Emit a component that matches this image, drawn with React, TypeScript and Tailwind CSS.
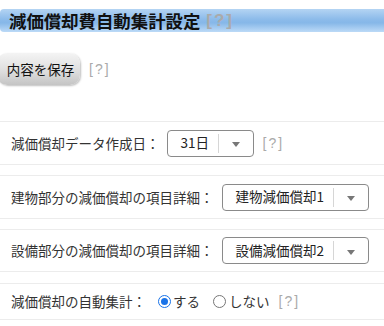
const jp = "font-['Noto_Sans_CJK_JP',sans-serif]";

function Help({ className = '' }: { className?: string }) {
  return (
    <span className={`font-['Liberation_Sans',sans-serif] tracking-[2px] text-[#aaa] ${className}`}>[?]</span>
  )
}

function Select({ value, width }: { value: string; width: string }) {
  return (
    <div className={`flex h-[27px] ${width} items-center rounded-[4px] border border-[#8a8a8a] bg-white`}>
      <span className="flex-1 pl-[13px] text-[13.5px] leading-none text-[#222]">{value}</span>
      <span className="h-[19px] w-px bg-[#d6d6d6]" />
      <span className="flex w-[34px] items-center justify-center pt-[3px]">
        <svg width="8" height="5" viewBox="0 0 8 5">
          <path d="M0 0h8L4 5z" fill="#777" />
        </svg>
      </span>
    </div>
  )
}

function Radio({ checked }: { checked?: boolean }) {
  return checked ? (
    <span className="flex h-[13px] w-[13px] items-center justify-center rounded-full border border-[#1a73e8] bg-white">
      <span className="h-[7px] w-[7px] rounded-full bg-[#1a73e8]" />
    </span>
  ) : (
    <span className="h-[13px] w-[13px] rounded-full border border-[#767676] bg-white" />
  )
}

export default function App() {
  return (
    <div className={`h-[326px] w-[384px] overflow-hidden bg-white ${jp}`}>
      <div className="mt-[9px] flex h-[23px] items-center rounded-l-[4px] bg-[linear-gradient(to_bottom,#b4d4f3_0%,#8cbbea_45%,#86b7e8_60%,#bcdaf7_100%)] pl-[9px]">
        <span className="text-[17.4px] font-bold leading-none text-[#111]">減価償却費自動集計設定</span>
        <Help className="ml-[6px] text-[17px] font-bold leading-none tracking-[1px] text-[#a9a9a9]" />
      </div>

      <div className="mt-[21px] flex items-center">
        <button className="-ml-[3px] h-[32px] w-[83px] rounded-[10px] bg-[linear-gradient(to_bottom,#f4f4f4,#dcdcdc_60%,#c4c4c4)] pl-[4px] text-[13.5px] text-[#111] shadow-[1px_1px_2px_rgba(0,0,0,0.25)]">
          内容を保存
        </button>
        <Help className="ml-[9px] text-[14px]" />
      </div>

      <div className="mt-[36px] flex flex-col gap-[10px] text-[13.5px] text-[#333]">
        <div className="flex h-[44px] items-center border-y border-[#ececec] pl-[11px]">
          <span>減価償却データ作成日：</span>
          <div className="ml-[7px]">
            <Select value="31日" width="w-[87px]" />
          </div>
          <Help className="ml-[9px] text-[14px]" />
        </div>
        <div className="flex h-[44px] items-center border-y border-[#ececec] pl-[11px]">
          <span>建物部分の減価償却の項目詳細：</span>
          <div className="ml-[8px]">
            <Select value="建物減価償却1" width="w-[147px]" />
          </div>
        </div>
        <div className="flex h-[43px] items-center border-y border-[#ececec] pl-[11px]">
          <span>設備部分の減価償却の項目詳細：</span>
          <div className="ml-[8px]">
            <Select value="設備減価償却2" width="w-[147px]" />
          </div>
        </div>
        <div className="mt-[1px] flex h-[37px] items-center border-y border-[#ececec] pl-[11px]">
          <span>減価償却の自動集計：</span>
          <label className="ml-[12px] flex items-center gap-[2px]">
            <Radio checked />
            <span>する</span>
          </label>
          <label className="ml-[13px] flex items-center gap-[3px]">
            <Radio />
            <span>しない</span>
          </label>
          <Help className="ml-[9px] text-[14px]" />
        </div>
      </div>
    </div>
  )
}
